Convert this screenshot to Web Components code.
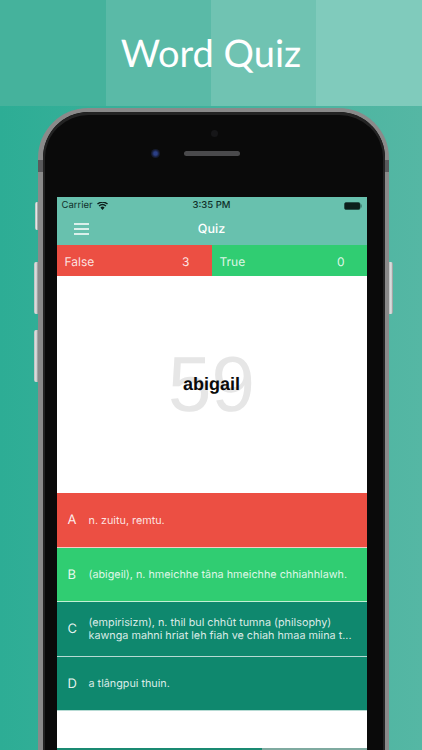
<!DOCTYPE html>
<html>
<head>
<meta charset="utf-8">
<title>Word Quiz</title>
<style>
html,body{margin:0;padding:0;}
body{width:422px;height:750px;overflow:hidden;background:linear-gradient(90deg,#2dad95,#55b7a4);font-family:"Inter","Liberation Sans",sans-serif;text-rendering:geometricPrecision;}
</style>
</head>
<body>
<quiz-hero>Word Quiz</quiz-hero>
<phone-frame>
  <status-bar></status-bar>
  <nav-bar>Quiz</nav-bar>
  <score-bar>
    <score-cell label="False" count="3" color="#ec4f43"></score-cell>
    <score-cell label="True" count="0" color="#30cd72"></score-cell>
  </score-bar>
  <word-card word="abigail" timer="59"></word-card>
  <answer-option letter="A" color="#ec4f43">n. zuitu, remtu.</answer-option>
  <answer-option letter="B" color="#30cd72">(abigeil), n. hmeichhe tâna hmeichhe chhiahhlawh.</answer-option>
  <answer-option letter="C" color="#0f886e">(empirisizm), n. thil bul chhût tumna (philsophy) kawnga mahni hriat leh fiah ve chiah hmaa miina t...</answer-option>
  <answer-option letter="D" color="#0f886e">a tlângpui thuin.</answer-option>
  <quiz-footer></quiz-footer>
</phone-frame>
<script>
class QuizHero extends HTMLElement {
    constructor() {
        super();
        this.attachShadow({ mode: "open" }).innerHTML = `
        <style>
        :host{display:grid;height:106px;color:#fff;}
        .strips,.title{grid-area:1/1;}
        .strips{display:grid;grid-template-columns:106px 105px 105px 106px;}
        .strips div:nth-child(1){background:#45b29c;}
        .strips div:nth-child(2){background:#5abaa7;}
        .strips div:nth-child(3){background:#70c3b2;}
        .strips div:nth-child(4){background:#80cbbc;}
        .title{display:flex;align-items:center;justify-content:center;font:400 38px Lato,sans-serif;padding-bottom:1px;}
        </style>
        <div class="strips"><div></div><div></div><div></div><div></div></div>
        <div class="title"><slot></slot></div>`;
    }
}
customElements.define("quiz-hero", QuizHero);

class PhoneFrame extends HTMLElement {
    constructor() {
        super();
        this.attachShadow({ mode: "open" }).innerHTML = `
        <style>
        :host{display:block;position:relative;box-sizing:border-box;width:351px;height:642px;margin:2px 0 0 37.5px;
            background:#0a0a0a;border-radius:50px 50px 0 0;border:solid #8a8a8a;border-width:4px 4px 0 5px;}
        .bezel{position:absolute;inset:0;border:solid #232323;border-width:3px 2px 0 2px;border-radius:46px 46px 0 0;}
        .top{height:85px;position:relative;}
        .sensor{position:absolute;left:168px;top:18px;width:7px;height:7px;border-radius:50%;background:#161618;}
        .camera{position:absolute;left:108px;top:37px;width:9px;height:9px;border-radius:50%;background:radial-gradient(circle,#2b3f86 25%,#141a30 60%,#1b1b1f);}
        .speaker{position:absolute;left:141px;top:39px;width:56px;height:5px;border-radius:3px;background:#4a4a4c;}
        .screen{position:relative;margin-left:14px;width:310px;display:flex;flex-direction:column;background:#fff;}
        .btn{position:absolute;background:linear-gradient(90deg,#b9bcbc,#e4e6e6 50%,#8e9090);border-radius:2px 0 0 2px;}
        .mute{left:-8px;top:90px;width:3px;height:28px;}
        .up{left:-9px;top:150px;width:4px;height:52px;}
        .down{left:-9px;top:218px;width:4px;height:52px;}
        .power{right:-8px;top:150px;width:4px;height:52px;border-radius:0 2px 2px 0;}
        .band{position:absolute;width:5px;height:12px;top:48px;background:#5a5a5c;}
        .band.l{left:-5px;}
        .band.r{right:-4px;width:4px;}
        </style>
        <div class="btn mute"></div><div class="btn up"></div><div class="btn down"></div><div class="btn power"></div>
        <div class="band l"></div><div class="band r"></div>
        <div class="bezel"></div>
        <div class="top">
            <div class="sensor"></div><div class="camera"></div><div class="speaker"></div>
        </div>
        <div class="screen"><slot></slot></div>`;
    }
}
customElements.define("phone-frame", PhoneFrame);

class StatusBar extends HTMLElement {
    constructor() {
        super();
        this.attachShadow({ mode: "open" }).innerHTML = `
        <style>
        :host{display:grid;grid-template-columns:1fr auto 1fr;align-items:center;height:17px;padding:0 5px;background:#68c1ae;color:#10302a;font-size:9.5px;}
        .left{display:flex;align-items:center;gap:4px;}
        .time{font-weight:500;}
        .batt{justify-self:end;display:flex;align-items:center;}
        </style>
        <div class="left"><span>Carrier</span>
            <svg width="11" height="8" viewBox="0 0 11 8"><path d="M5.5 8 3.4 5.5a3.2 3.2 0 0 1 4.2 0zM2.6 4.6 1.6 3.4a6 6 0 0 1 7.8 0l-1 1.2a4.4 4.4 0 0 0-5.8 0zM.9 2.6 0 1.5a8.5 8.5 0 0 1 11 0l-.9 1.1a7.2 7.2 0 0 0-9.2 0z" fill="#0c1f1b"/></svg>
        </div>
        <span class="time">3:35 PM</span>
        <div class="batt">
            <svg width="18" height="8" viewBox="0 0 18 8"><rect x=".5" y=".5" width="15.5" height="7" rx="1.5" fill="#0c1f1b" stroke="#10302a" stroke-opacity=".5"/><rect x="16.5" y="2.5" width="1.2" height="3" fill="#10302a" fill-opacity=".5"/></svg>
        </div>`;
    }
}
customElements.define("status-bar", StatusBar);

class NavBar extends HTMLElement {
    constructor() {
        super();
        this.attachShadow({ mode: "open" }).innerHTML = `
        <style>
        :host{display:flex;align-items:center;justify-content:center;position:relative;height:31px;background:#68c1ae;color:#fff;font-size:12.5px;font-weight:500;}
        svg{position:absolute;left:17px;top:9px;}
        </style>
        <svg width="15" height="12" viewBox="0 0 15 12"><path d="M0 1h15M0 6h15M0 11h15" stroke="#fff" stroke-width="1.3"/></svg>
        <slot></slot>`;
    }
}
customElements.define("nav-bar", NavBar);

class ScoreBar extends HTMLElement {
    constructor() {
        super();
        this.attachShadow({ mode: "open" }).innerHTML = `
        <style>
        :host{display:grid;grid-template-columns:155px 155px;height:31px;}
        </style>
        <slot></slot>`;
    }
}
customElements.define("score-bar", ScoreBar);

class ScoreCell extends HTMLElement {
    constructor() {
        super();
        this.attachShadow({ mode: "open" });
    }
    connectedCallback() {
        this.shadowRoot.innerHTML = `
        <style>
        :host{display:flex;align-items:center;justify-content:space-between;padding:1px 22px 0 8px;background:${this.getAttribute("color")};color:rgba(255,255,255,.85);font-size:12px;}
        </style>
        <span>${this.getAttribute("label")}</span><span>${this.getAttribute("count")}</span>`;
    }
}
customElements.define("score-cell", ScoreCell);

class WordCard extends HTMLElement {
    constructor() {
        super();
        this.attachShadow({ mode: "open" });
    }
    connectedCallback() {
        this.shadowRoot.innerHTML = `
        <style>
        :host{display:grid;height:217px;background:#fff;place-items:center;}
        .timer,.word{grid-area:1/1;}
        .timer{font:400 78px "Liberation Sans",sans-serif;color:#e6e6e6;padding-bottom:1px;}
        .word{font:700 18px "Liberation Sans",sans-serif;color:#0a0a0a;}
        </style>
        <div class="timer">${this.getAttribute("timer")}</div>
        <div class="word">${this.getAttribute("word")}</div>`;
    }
}
customElements.define("word-card", WordCard);

class AnswerOption extends HTMLElement {
    constructor() {
        super();
        this.attachShadow({ mode: "open" });
    }
    connectedCallback() {
        this.shadowRoot.innerHTML = `
        <style>
        :host{display:flex;align-items:center;box-sizing:border-box;height:54.5px;padding:1px 10px 0 11px;background:${this.getAttribute("color")};color:rgba(255,255,255,.85);border-bottom:1px solid rgba(255,255,255,.7);}
        .letter{width:21px;flex:none;font-size:13px;color:rgba(255,255,255,.9);}
        .text{font-size:10.8px;line-height:13px;}
        </style>
        <span class="letter">${this.getAttribute("letter")}</span>
        <span class="text"><slot></slot></span>`;
    }
}
customElements.define("answer-option", AnswerOption);

class QuizFooter extends HTMLElement {
    constructor() {
        super();
        this.attachShadow({ mode: "open" }).innerHTML = `
        <style>
        :host{display:flex;align-items:flex-end;height:39px;background:#fff;}
        .line{flex:1;height:2px;background:linear-gradient(90deg,#1a8a72 66%,#7faaa0 66%);}
        </style>
        <div class="line"></div>`;
    }
}
customElements.define("quiz-footer", QuizFooter);
</script>
</body>
</html>
